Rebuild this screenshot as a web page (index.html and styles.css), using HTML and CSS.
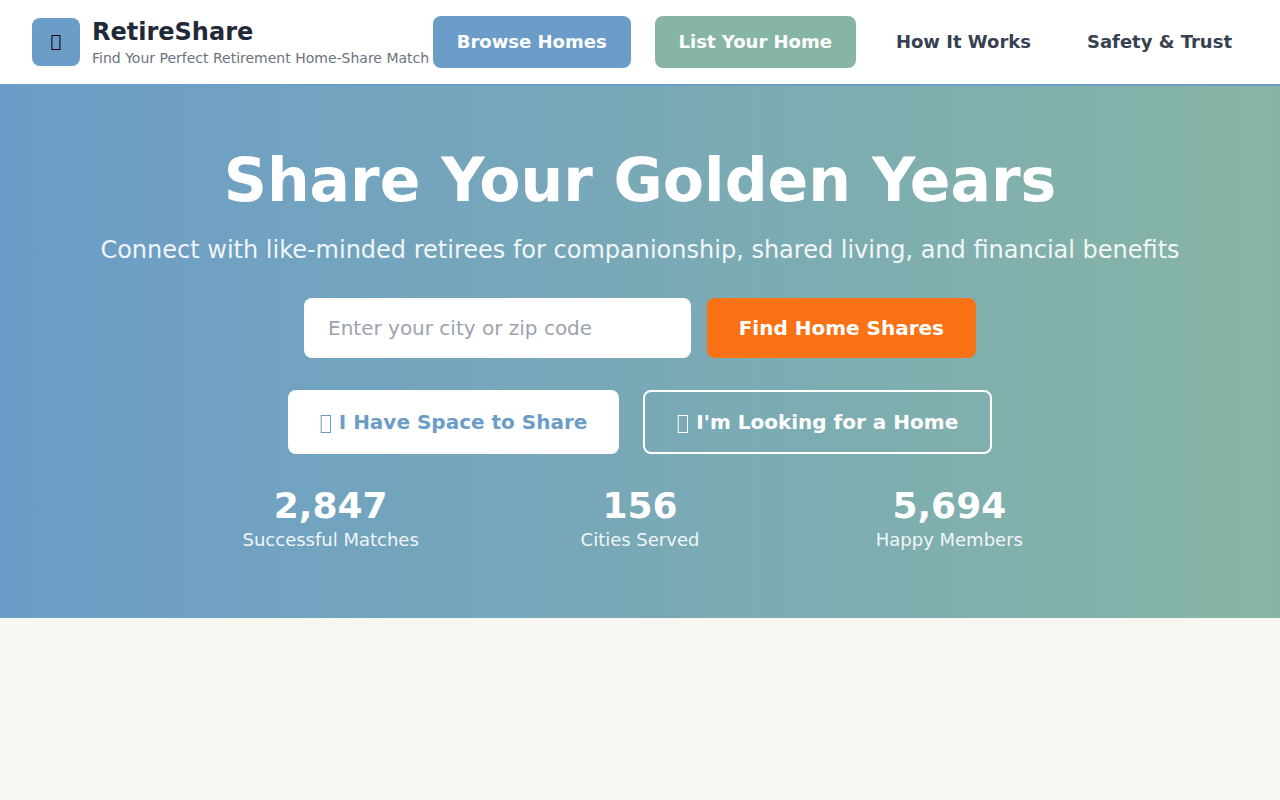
FILE: index.html
```
<!DOCTYPE html>
<html lang="en">
<head>
    <meta charset="UTF-8">
    <title>RetireShare - Find Your Perfect Retirement Home-Share Match</title>
    <meta name="viewport" content="width=device-width, initial-scale=1">
    <link rel="stylesheet" href="styles.css">
</head>
<body>
    <header class="header">
        <div class="brand">
            <div class="brand-icon">
                <span><svg class="box-icon box-icon-sm" viewBox="0 0 10 15" aria-hidden="true"><rect x="0.9" y="0.5" width="8" height="14"/></svg></span>
            </div>
            <div>
                <div class="brand-name">RetireShare</div>
                <p class="brand-tagline">Find Your Perfect Retirement Home-Share Match</p>
            </div>
        </div>
        <nav class="nav">
            <button type="button" class="nav-btn nav-btn-blue">Browse Homes</button>
            <button type="button" class="nav-btn nav-btn-green">List Your Home</button>
            <a href="#how-it-works" class="nav-link">How It Works</a>
            <a href="#safety" class="nav-link">Safety &amp; Trust</a>
        </nav>
    </header>

    <main>
        <section class="hero">
            <h1>Share Your Golden Years</h1>
            <p class="hero-subtitle">Connect with like-minded retirees for companionship, shared living, and financial benefits</p>

            <form class="search-form">
                <input type="text" name="location" placeholder="Enter your city or zip code" aria-label="City or zip code">
                <button type="submit" class="search-btn">Find Home Shares</button>
            </form>

            <div class="hero-actions">
                <button type="button" class="action-btn action-btn-solid"><svg class="box-icon" viewBox="0 0 12 18" aria-hidden="true"><rect x="1.2" y="0.5" width="9.3" height="17"/></svg> I Have Space to Share</button>
                <button type="button" class="action-btn action-btn-outline"><svg class="box-icon" viewBox="0 0 12 18" aria-hidden="true"><rect x="1.2" y="0.5" width="9.3" height="17"/></svg> I'm Looking for a Home</button>
            </div>

            <div class="stats">
                <div>
                    <div class="stat-number">2,847</div>
                    <div class="stat-label">Successful Matches</div>
                </div>
                <div>
                    <div class="stat-number">156</div>
                    <div class="stat-label">Cities Served</div>
                </div>
                <div>
                    <div class="stat-number">5,694</div>
                    <div class="stat-label">Happy Members</div>
                </div>
            </div>
        </section>
    </main>
</body>
</html>
```
FILE: styles.css
```
* {
    box-sizing: border-box;
}
body {
    margin: 0;
    min-height: 100vh;
    font-family: "DejaVu Sans", sans-serif;
    font-size: 16px;
    line-height: 24px;
    background: #f8f6f1;
}
h1, p {
    margin: 0;
}
button, input {
    font-family: inherit;
    border: none;
}
button {
    cursor: pointer;
}
.box-icon {
    width: 12px;
    height: 18px;
    vertical-align: -4px;
    fill: none;
    stroke: currentColor;
    stroke-width: 1;
}
.box-icon-sm {
    width: 10px;
    height: 15px;
    vertical-align: -3px;
}

/* Header */
.header {
    display: flex;
    align-items: center;
    justify-content: space-between;
    padding: 16px 32px;
    background: #fff;
    border-bottom: 2px solid #6b9dc8;
}
.brand {
    display: flex;
    align-items: center;
    gap: 12px;
}
.brand-icon {
    display: flex;
    align-items: center;
    justify-content: center;
    width: 48px;
    height: 48px;
    border-radius: 8px;
    background: #6b9dc8;
    color: #000;
}
.brand-name {
    font-size: 24px;
    line-height: 32px;
    font-weight: 700;
    color: #1f2937;
}
.brand-tagline {
    font-size: 14px;
    line-height: 20px;
    color: #6b7280;
    white-space: nowrap;
}
.nav {
    display: flex;
    align-items: center;
    gap: 24px;
}
.nav-btn, .nav-link {
    font-size: 18px;
    line-height: 28px;
    font-weight: 600;
    white-space: nowrap;
}
.nav-btn {
    padding: 12px 24px;
    border-radius: 8px;
    color: #fff;
}
.nav-btn-blue {
    background: #6b9dc8;
}
.nav-btn-green {
    background: #87b5a5;
}
.nav-link {
    padding: 12px 16px;
    color: #374151;
    text-decoration: none;
}
.nav-link:hover {
    color: #6b9dc8;
}

/* Hero */
.hero {
    padding: 64px 32px;
    background: linear-gradient(to right, #6b9dc8, #87b5a5);
    color: #fff;
    text-align: center;
}
.hero h1 {
    margin-bottom: 24px;
    font-size: 60px;
    line-height: 60px;
    font-weight: 700;
}
.hero-subtitle {
    margin-bottom: 32px;
    font-size: 24px;
    line-height: 32px;
    opacity: 0.9;
}
.search-form {
    display: flex;
    gap: 16px;
    max-width: 672px;
    margin: 0 auto 32px;
}
.search-form input {
    flex: 1;
    min-width: 0;
    padding: 16px 24px;
    border-radius: 8px;
    background: #fff;
    font-size: 20px;
    line-height: 28px;
    color: #1f2937;
}
.search-form input::placeholder {
    color: #9ca3af;
}
.search-btn, .action-btn {
    padding: 16px 32px;
    border-radius: 8px;
    font-size: 20px;
    line-height: 28px;
    font-weight: 600;
}
.search-btn {
    background: #f97316;
    color: #fff;
}
.hero-actions {
    display: flex;
    justify-content: center;
    gap: 24px;
    margin-bottom: 32px;
}
.action-btn-solid {
    background: #fff;
    color: #6b9dc8;
}
.action-btn-outline {
    background: transparent;
    border: 2px solid #fff;
    color: #fff;
}

/* Stats */
.stats {
    display: grid;
    grid-template-columns: repeat(3, 1fr);
    gap: 32px;
    max-width: 896px;
    margin: 0 auto;
}
.stat-number {
    font-size: 36px;
    line-height: 40px;
    font-weight: 700;
}
.stat-label {
    font-size: 18px;
    line-height: 28px;
    opacity: 0.9;
}

@media (max-width: 1100px) {
    .header {
        flex-direction: column;
        gap: 16px;
    }
    .nav {
        flex-wrap: wrap;
        justify-content: center;
    }
}
@media (max-width: 700px) {
    .brand-tagline {
        white-space: normal;
    }
    .hero h1 {
        font-size: 36px;
        line-height: 40px;
    }
    .search-form, .hero-actions {
        flex-direction: column;
    }
    .stats {
        grid-template-columns: 1fr;
    }
}
```
